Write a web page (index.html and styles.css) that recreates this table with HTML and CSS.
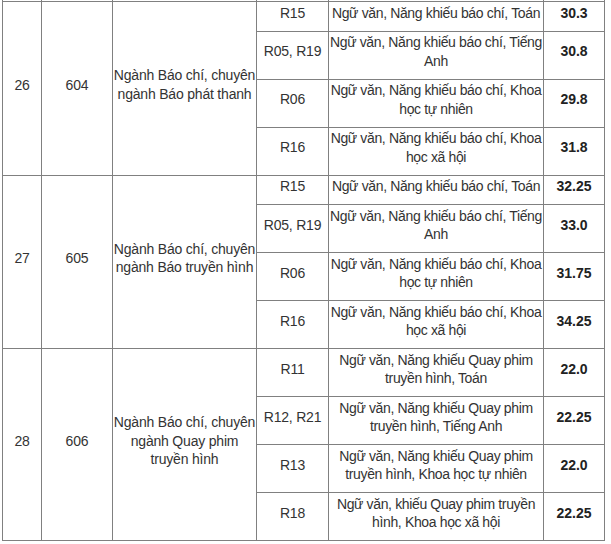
FILE: index.html
```html
<!DOCTYPE html>
<html lang="vi">
<head>
<meta charset="utf-8">
<title>Điểm chuẩn</title>
<link rel="stylesheet" href="styles.css">
</head>
<body>
<table class="scores">
  <colgroup>
    <col class="c-stt">
    <col class="c-code">
    <col class="c-name">
    <col class="c-combo">
    <col class="c-subj">
    <col class="c-score">
  </colgroup>
  <tbody>
    <tr class="cut"><td></td><td></td><td></td><td></td><td></td><td></td></tr>
    <tr>
      <td rowspan="4">26</td>
      <td rowspan="4">604</td>
      <td rowspan="4">Ngành Báo chí, chuyên ngành Báo phát thanh</td>
      <td>R15</td>
      <td class="subj">Ngữ văn, Năng khiếu báo chí, Toán</td>
      <td class="score">30.3</td>
    </tr>
    <tr>
      <td>R05, R19</td>
      <td class="subj">Ngữ văn, Năng khiếu báo chí, Tiếng Anh</td>
      <td class="score">30.8</td>
    </tr>
    <tr>
      <td>R06</td>
      <td class="subj">Ngữ văn, Năng khiếu báo chí, Khoa học tự nhiên</td>
      <td class="score">29.8</td>
    </tr>
    <tr>
      <td>R16</td>
      <td class="subj">Ngữ văn, Năng khiếu báo chí, Khoa học xã hội</td>
      <td class="score">31.8</td>
    </tr>
    <tr>
      <td rowspan="4">27</td>
      <td rowspan="4">605</td>
      <td rowspan="4">Ngành Báo chí, chuyên ngành Báo truyền hình</td>
      <td>R15</td>
      <td class="subj">Ngữ văn, Năng khiếu báo chí, Toán</td>
      <td class="score">32.25</td>
    </tr>
    <tr>
      <td>R05, R19</td>
      <td class="subj">Ngữ văn, Năng khiếu báo chí, Tiếng Anh</td>
      <td class="score">33.0</td>
    </tr>
    <tr>
      <td>R06</td>
      <td class="subj">Ngữ văn, Năng khiếu báo chí, Khoa học tự nhiên</td>
      <td class="score">31.75</td>
    </tr>
    <tr>
      <td>R16</td>
      <td class="subj">Ngữ văn, Năng khiếu báo chí, Khoa học xã hội</td>
      <td class="score">34.25</td>
    </tr>
    <tr>
      <td rowspan="4">28</td>
      <td rowspan="4">606</td>
      <td rowspan="4">Ngành Báo chí, chuyên ngành Quay phim truyền hình</td>
      <td>R11</td>
      <td class="subj">Ngữ văn, Năng khiếu Quay phim truyền hình, Toán</td>
      <td class="score">22.0</td>
    </tr>
    <tr>
      <td>R12, R21</td>
      <td class="subj">Ngữ văn, Năng khiếu Quay phim truyền hình, Tiếng Anh</td>
      <td class="score">22.25</td>
    </tr>
    <tr>
      <td>R13</td>
      <td class="subj">Ngữ văn, Năng khiếu Quay phim truyền hình, Khoa học tự nhiên</td>
      <td class="score">22.0</td>
    </tr>
    <tr>
      <td>R18</td>
      <td class="subj">Ngữ văn, khiếu Quay phim truyền hình, Khoa học xã hội</td>
      <td class="score">22.25</td>
    </tr>
  </tbody>
</table>
</body>
</html>
```
FILE: styles.css
```css
html, body {
  margin: 0;
  padding: 0;
  background: #fff;
}

body {
  overflow: hidden;
}

.scores {
  margin-left: 2px;
  border-collapse: collapse;
  table-layout: fixed;
  width: 603px;
  font-family: Arial, "Liberation Sans", sans-serif;
  font-size: 14px;
  letter-spacing: -0.2px;
  line-height: 18.5px;
  color: #333;
}

.c-stt { width: 39px; }
.c-code { width: 71px; }
.c-name { width: 144px; }
.c-combo { width: 72px; }
.c-subj { width: 215px; }
.c-score { width: 61px; }

.scores td {
  border: 1px solid #808080;
  padding: 1.5px 0 8.5px;
  text-align: center;
  vertical-align: middle;
}

.scores td.subj {
  letter-spacing: -0.36px;
}

.scores .cut td {
  border-top: 0;
  padding: 0;
  height: 1px;
  line-height: 1px;
}

.scores td.score {
  font-weight: bold;
  color: #222;
  letter-spacing: 0;
}
```
